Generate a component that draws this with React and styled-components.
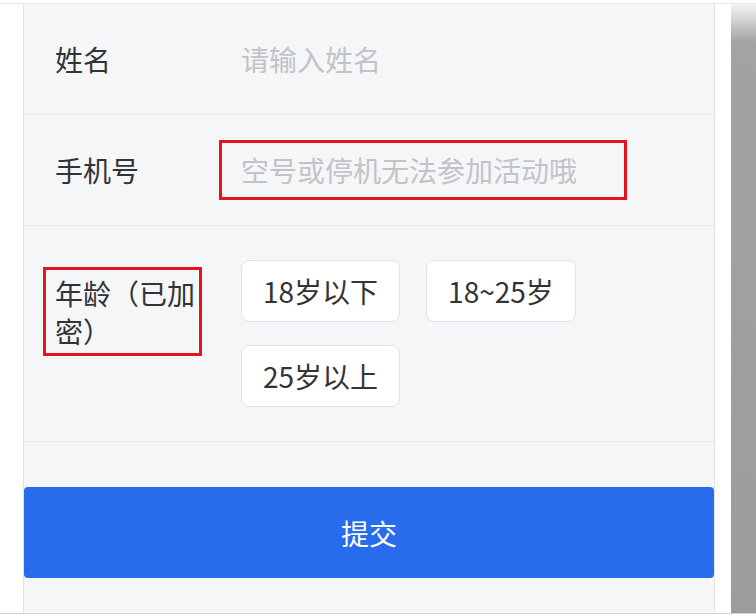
import React from "react";
import styled, { createGlobalStyle } from "styled-components";

const ageOptions = ["18岁以下", "18~25岁", "25岁以上"];

export default function App() {
  return (
    <>
      <GlobalStyle />
      <Screen>
        <Frame>
          <Margin />
          <Panel>
            <Field>
              <Label>姓名</Label>
              <Value>
                <TextInput placeholder="请输入姓名" />
              </Value>
            </Field>
            <Field>
              <Label>手机号</Label>
              <Value>
                <MarkedInput>
                  <TextInput placeholder="空号或停机无法参加活动哦" />
                </MarkedInput>
              </Value>
            </Field>
            <Field $pad={34}>
              <Label>
                <MarkedLabel>年龄（已加密）</MarkedLabel>
              </Label>
              <Options>
                {ageOptions.map((opt) => (
                  <Option key={opt}>{opt}</Option>
                ))}
              </Options>
            </Field>
            <Footer>
              <SubmitButton>提交</SubmitButton>
            </Footer>
          </Panel>
          <Gutter />
          <Shade />
        </Frame>
      </Screen>
    </>
  );
}

const GlobalStyle = createGlobalStyle`
  html, body {
    margin: 0;
    padding: 0;
    background: #fff;
  }
  body {
    font-family: "Noto Sans CJK SC", "Noto Sans", sans-serif;
  }
  * {
    box-sizing: border-box;
  }
`;

const Screen = styled.div`
  width: 756px;
  height: 615px;
  padding-top: 3px;
  display: flex;
  flex-direction: column;
  overflow: hidden;
`;

const Frame = styled.div`
  flex: 1;
  display: flex;
  border-top: 1px solid #e9e9eb;
  border-bottom: 1px solid #d4d4d4;
  margin-bottom: 1px;
`;

const Margin = styled.div`
  flex: 0 0 23px;
`;

const Panel = styled.div`
  flex: 0 0 692px;
  display: flex;
  flex-direction: column;
  background: #f5f6f8;
  border-left: 1px solid #e3e4e7;
  border-right: 1px solid #e3e4e7;
`;

const Gutter = styled.div`
  flex: 0 0 16px;
  background: #fff;
`;

const Shade = styled.div`
  flex: 1;
  background: linear-gradient(to bottom, #f4f4f4 0, #a3a3a3 38px, #9c9c9c 100%);
`;

const Field = styled.div`
  display: flex;
  align-items: flex-start;
  padding: ${(p) => p.$pad ?? 36}px 31px ${(p) => p.$pad ?? 36}px 31px;
  border-bottom: 1px solid #e5e6ea;
`;

const Label = styled.div`
  flex: 0 0 186px;
  font-size: 28px;
  line-height: 38px;
  color: #333;
`;

const MarkedLabel = styled.span`
  display: block;
  width: 159px;
  margin: 7px 0 0 -12px;
  padding: 4px 0 3px 9px;
  border: 3px solid #e5141c;
`;

const Value = styled.div`
  flex: 1;
`;

const MarkedInput = styled.div`
  width: 408px;
  margin: -11px 0 -11px -22px;
  padding: 8px 0 8px 19px;
  border: 3px solid #e5141c;
`;

const TextInput = styled.input`
  display: block;
  width: 100%;
  height: 38px;
  padding: 0;
  border: none;
  outline: none;
  background: transparent;
  font-family: inherit;
  font-size: 28px;
  line-height: 38px;
  color: #333;

  &::placeholder {
    color: #c2c3c7;
  }
`;

const Options = styled.div`
  flex: 1;
  display: flex;
  flex-wrap: wrap;
  gap: 23px 26px;
`;

const Option = styled.button`
  height: 62px;
  padding: 0 21px;
  background: #fff;
  border: 1px solid #e1e0ee;
  border-radius: 8px;
  font-family: inherit;
  font-size: 28px;
  color: #333;
`;

const Footer = styled.div`
  padding: 45px 0 35px;
`;

const SubmitButton = styled.button`
  display: block;
  width: 100%;
  height: 91px;
  border: none;
  border-radius: 4px;
  background: #296bed;
  color: #fff;
  font-family: inherit;
  font-size: 28px;
`;
